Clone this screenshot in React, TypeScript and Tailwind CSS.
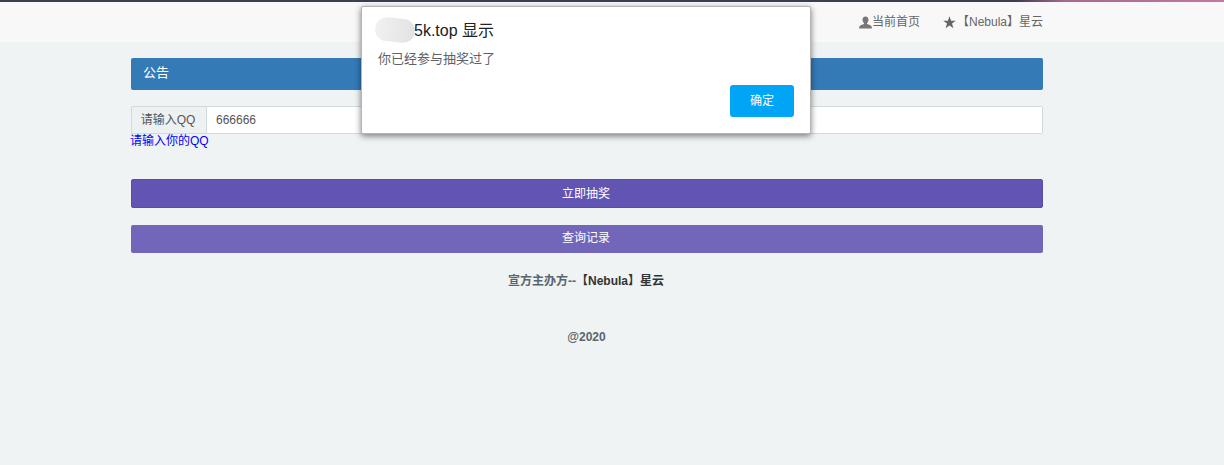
const sans = "font-['Liberation_Sans','Noto_Sans_CJK_SC',sans-serif]";

const Alert = () => {
    return (
        <div className="absolute left-[361px] top-[6px] w-[450px] h-[128px] bg-white rounded-[2px] border border-[#b5b5b5] shadow-[0_2px_6px_rgba(0,0,0,0.5)] px-[16px]">
            <div className="flex items-center h-[20px] mt-[14px] text-[16px] text-[#202124] relative">
                <span className="ml-[36px]">5k.top 显示</span>
                <div className="absolute left-[-3px] top-[-3px] w-[40px] h-[24px] rounded-[12px] bg-gradient-to-r from-[#f1f1f1] to-[#e3e3e3] rotate-[6deg]"></div>
            </div>
            <div className="mt-[8px] text-[13px] leading-[20px] text-[#5f6368]">你已经参与抽奖过了</div>
            <div className="flex justify-end mt-[16px]">
                <button className="w-[64px] h-[32px] rounded-[3px] bg-[#00a6f5] text-white text-[12px]">确定</button>
            </div>
        </div>
    );
};

const App = () => {
    return (
        <div className={`${sans} relative w-[1224px] h-[465px] overflow-hidden bg-[#eff3f4] text-[#58666e] text-[12px]`}>
            <div className="h-[2px] bg-gradient-to-r from-[#3a3f51] from-[83%] via-[#a9698a] via-[87%] to-[#c07a9c]"></div>
            <div className="h-[40px] bg-[#f8f8f8] flex items-center justify-end pr-[181px] text-[#666] text-[12px]">
                <div className="flex items-center mr-[23px]">
                    <svg width="13" height="13" viewBox="0 0 13 13" fill="#777">
                        <path d="M6.5 0.5c-1.9 0-3 1.4-3 3.2 0 1.3 0.6 2.6 1.5 3.2v1.2c-1.8 0.6-4.2 1.3-4.6 2.5-0.2 0.6-0.3 1.2-0.3 1.9h12.8c0-0.7-0.1-1.3-0.3-1.9-0.4-1.2-2.8-1.9-4.6-2.5v-1.2c0.9-0.6 1.5-1.9 1.5-3.2 0-1.8-1.1-3.2-3-3.2z" />
                    </svg>
                    <span>当前首页</span>
                </div>
                <div className="flex items-center">
                    <svg width="13" height="13" viewBox="0 0 13 13" fill="#666" className="mr-[1px]">
                        <path d="M6.5 0.3l1.6 4.4h4.7l-3.8 2.9 1.4 4.6-3.9-2.8-3.9 2.8 1.4-4.6-3.8-2.9h4.7z" />
                    </svg>
                    <span>【Nebula】星云</span>
                </div>
            </div>
            <div className="mx-[131px] w-[912px] pt-[16px]">
                <div className="h-[32px] bg-[#337ab7] rounded-[2px] text-white text-[13px] leading-[30px] pl-[12px]">公告</div>
                <div className="flex h-[28px] mt-[16px]">
                    <div className="w-[76px] bg-[#eef1f2] border border-[#cfdadd] rounded-l-[2px] flex items-center justify-center pr-[2px] text-[12px] text-[#555]">请输入QQ</div>
                    <div className="flex-1 bg-white border border-l-0 border-[#cfdadd] rounded-r-[2px] flex items-center pl-[9px] text-[12px] text-[#555]">666666</div>
                </div>
                <div className="text-[12px] leading-[14px] text-[#0000ff] -ml-[1px]">请输入你的QQ</div>
                <button className="block w-full h-[29px] mt-[31px] pr-[2px] bg-[#6254b2] border border-[#5a4daa] rounded-[2px] text-white text-[12px]">立即抽奖</button>
                <button className="block w-full h-[28px] mt-[17px] pr-[2px] pb-[2px] bg-[#7266ba] rounded-[2px] text-white text-[12px]">查询记录</button>
                <div className="mt-[20px] text-center font-bold leading-[16px] pr-[2px]">
                    宣方主办方--<span className="text-[#333]">【Nebula】星云</span>
                </div>
                <div className="mt-[40px] text-center font-bold leading-[16px] mr-[1px]">@2020</div>
            </div>
            <Alert />
        </div>
    );
};

export default App;
